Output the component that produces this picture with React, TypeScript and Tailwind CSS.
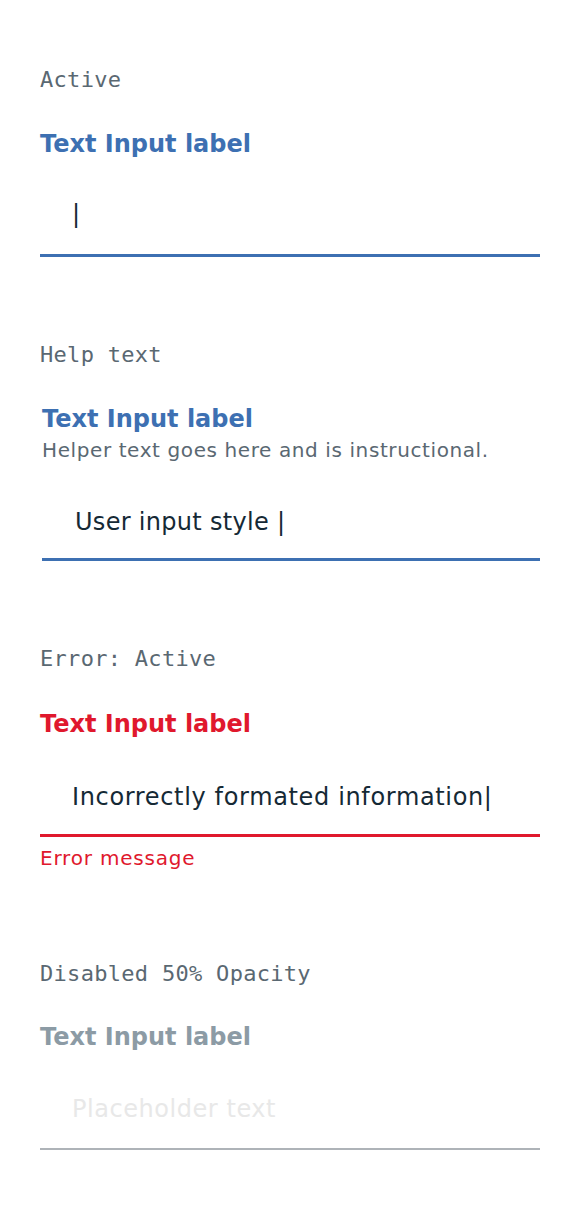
import React from "react";

function Caption({ children }: { children: React.ReactNode }) {
  return (
    <div className="font-['DejaVu_Sans_Mono',monospace] text-[22px] leading-[28px] text-[#5a6872] tracking-[0.3px]">
      {children}
    </div>
  );
}

const label = "text-[24px] leading-[32px] font-bold";
const input = "text-[24px] leading-[30px] text-[#152935] tracking-[0.55px]";

export default function App() {
  return (
    <div className="w-[580px] h-[1214px] bg-white font-['DejaVu_Sans',sans-serif] pl-[40px] pr-[40px]">
      {/* Active */}
      <div className="pt-[66px]">
        <Caption>Active</Caption>
        <div className={"mt-[34px] text-[#3d70b2] " + label}>Text Input label</div>
        <div className={"mt-[39px] h-[58px] border-b-[3px] border-[#3d70b2] pl-[32px] " + input}>|</div>
      </div>

      {/* Help text */}
      <div className="pt-[84px]">
        <Caption>Help text</Caption>
        <div className="pl-[2px]">
          <div className={"mt-[34px] text-[#3d70b2] " + label}>Text Input label</div>
          <div className="mt-[1px] text-[20px] leading-[28px] text-[#5a6872] tracking-[0.6px]">
            Helper text goes here and is instructional.
          </div>
          <div className={"mt-[43px] h-[54px] border-b-[3px] border-[#3d70b2] pl-[33px] tracking-[0.3px] text-[24px] leading-[30px] text-[#152935]"}>
            User input style |
          </div>
        </div>
      </div>

      {/* Error */}
      <div className="pt-[84px]">
        <Caption>Error: Active</Caption>
        <div className={"mt-[35px] text-[#e0182d] " + label}>Text Input label</div>
        <div className={"mt-[35px] h-[62px] border-b-[3px] border-[#e0182d] pl-[32px] pt-[7px] text-[24px] leading-[30px] text-[#152935] tracking-[0.65px]"}>
          Incorrectly formated information|
        </div>
        <div className="mt-[7px] text-[20px] leading-[28px] text-[#e0182d] tracking-[0.8px]">Error message</div>
      </div>

      {/* Disabled */}
      <div className="pt-[88px]">
        <Caption>Disabled 50% Opacity</Caption>
        <div className={"mt-[33px] text-[#8c9ba5] " + label}>Text Input label</div>
        <div className={"mt-[37px] h-[60px] border-b-[2px] border-[#aeb3b8] pl-[32px] pt-[4px] text-[#e8e8e8] " + input}>
          Placeholder text
        </div>
      </div>
    </div>
  );
}
